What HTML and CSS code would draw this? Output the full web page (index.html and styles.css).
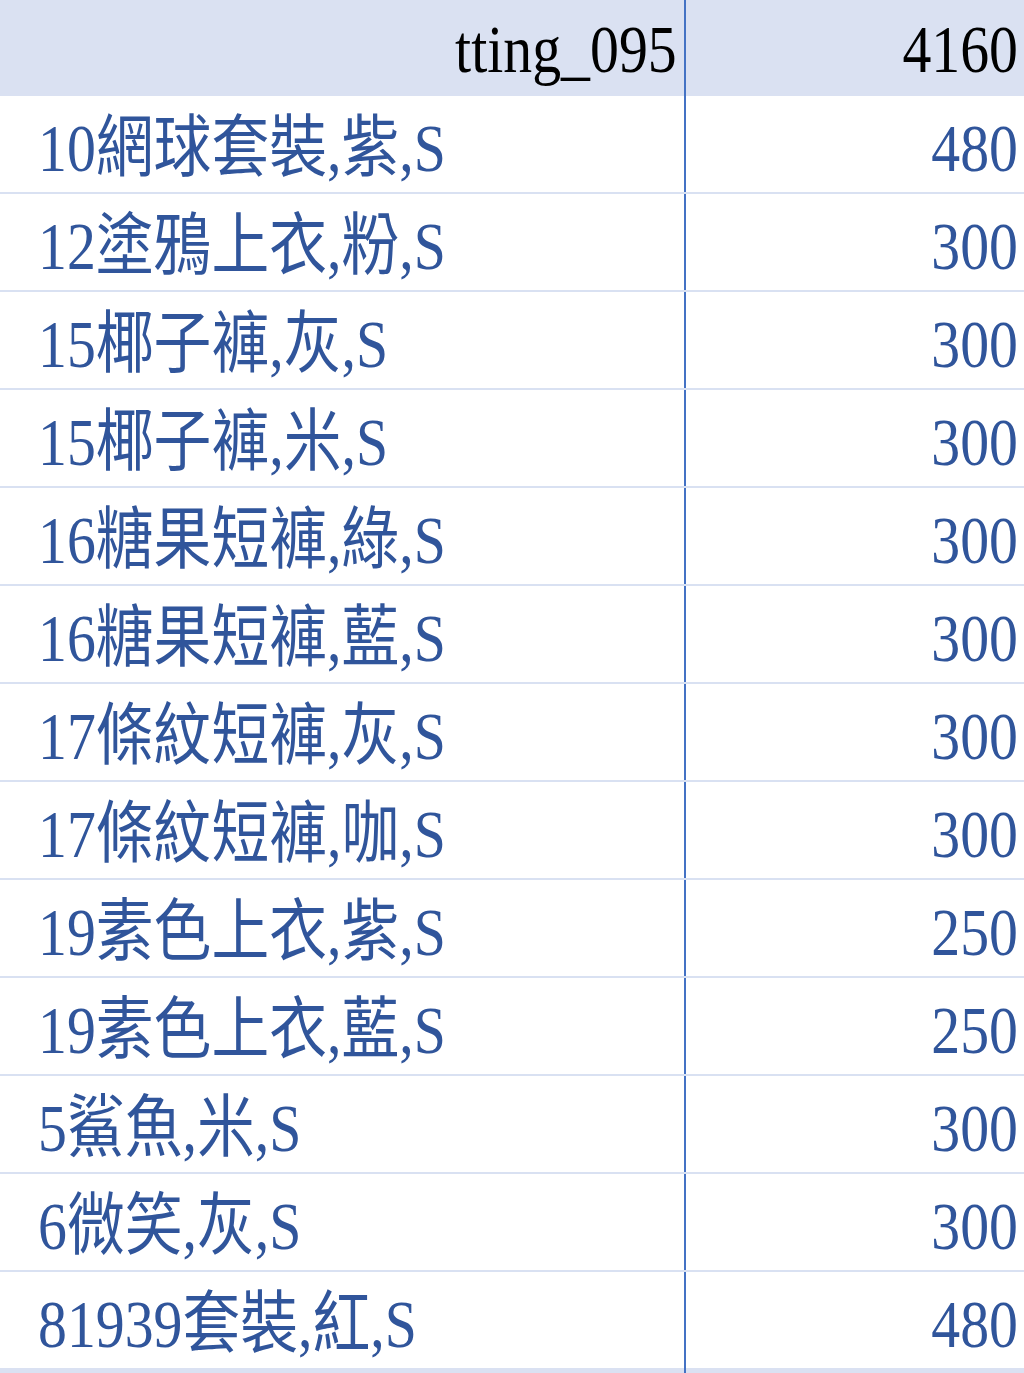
FILE: index.html
```html
<!DOCTYPE html>
<html lang="zh-Hant">
<head>
<meta charset="utf-8">
<title>Sheet</title>
<link rel="stylesheet" href="styles.css">
</head>
<body>
<div class="sheet">
  <div class="row head">
    <div class="cell name"><span class="txt r">tting_095</span></div>
    <div class="cell qty"><span class="txt r">4160</span></div>
  </div>
  <div class="row"><div class="cell name"><span class="txt l">10網球套裝,紫,S</span></div><div class="cell qty"><span class="txt r">480</span></div></div>
  <div class="row"><div class="cell name"><span class="txt l">12塗鴉上衣,粉,S</span></div><div class="cell qty"><span class="txt r">300</span></div></div>
  <div class="row"><div class="cell name"><span class="txt l">15椰子褲,灰,S</span></div><div class="cell qty"><span class="txt r">300</span></div></div>
  <div class="row"><div class="cell name"><span class="txt l">15椰子褲,米,S</span></div><div class="cell qty"><span class="txt r">300</span></div></div>
  <div class="row"><div class="cell name"><span class="txt l">16糖果短褲,綠,S</span></div><div class="cell qty"><span class="txt r">300</span></div></div>
  <div class="row"><div class="cell name"><span class="txt l">16糖果短褲,藍,S</span></div><div class="cell qty"><span class="txt r">300</span></div></div>
  <div class="row"><div class="cell name"><span class="txt l">17條紋短褲,灰,S</span></div><div class="cell qty"><span class="txt r">300</span></div></div>
  <div class="row"><div class="cell name"><span class="txt l">17條紋短褲,咖,S</span></div><div class="cell qty"><span class="txt r">300</span></div></div>
  <div class="row"><div class="cell name"><span class="txt l">19素色上衣,紫,S</span></div><div class="cell qty"><span class="txt r">250</span></div></div>
  <div class="row"><div class="cell name"><span class="txt l">19素色上衣,藍,S</span></div><div class="cell qty"><span class="txt r">250</span></div></div>
  <div class="row"><div class="cell name"><span class="txt l">5鯊魚,米,S</span></div><div class="cell qty"><span class="txt r">300</span></div></div>
  <div class="row"><div class="cell name"><span class="txt l">6微笑,灰,S</span></div><div class="cell qty"><span class="txt r">300</span></div></div>
  <div class="row last"><div class="cell name"><span class="txt l">81939套裝,紅,S</span></div><div class="cell qty"><span class="txt r">480</span></div></div>
  <div class="row tail"><div class="cell name"></div><div class="cell qty"></div></div>
</div>
</body>
</html>
```

FILE: styles.css
```css
html, body {
  margin: 0;
  padding: 0;
  background: #ffffff;
}
.sheet {
  width: 1024px;
  height: 1373px;
  overflow: hidden;
  font-family: "Liberation Serif", "Noto Sans CJK TC", serif;
  font-size: 68px;
  color: #30559b;
}
.row {
  display: grid;
  grid-template-columns: 686px 1fr;
  height: 98px;
  box-sizing: border-box;
  border-bottom: 2px solid #d9e1f2;
}
.cell {
  box-sizing: border-box;
  line-height: 74px;
  padding-top: 15px;
  white-space: nowrap;
  overflow: hidden;
}
.cell.name {
  border-right: 2px solid #4472c4;
  padding-left: 38px;
}
.cell.qty {
  text-align: right;
  padding-right: 6px;
}
.txt {
  display: inline-block;
  transform: scaleX(0.85);
}
.txt.l { transform-origin: left center; }
.txt.r { transform-origin: right center; }

.row.head {
  height: 96px;
  border-bottom: none;
  background: #dae1f2;
  color: #000000;
}
.row.head .cell {
  padding-top: 12px;
}
.row.head .cell.name {
  text-align: right;
  padding-right: 7px;
  padding-left: 0;
}
.row.last {
  height: 96px;
  border-bottom: none;
}
.row.tail {
  height: 20px;
  border-bottom: none;
  background: #dae1f2;
}
```
